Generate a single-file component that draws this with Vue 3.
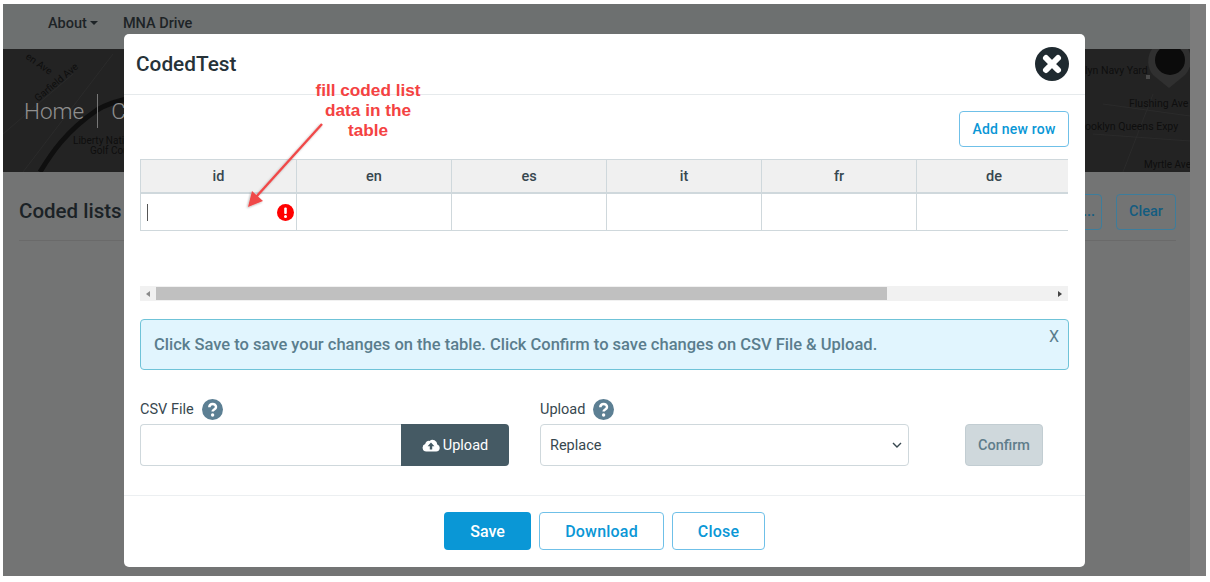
<script setup>
const columns = ['id', 'en', 'es', 'it', 'fr', 'de']
const mapLabels = [
  { x: 22, y: 54, t: 'en Ave', r: 35, s: 10 },
  { x: 35, y: 98, t: 'Garfield Ave', r: -40, s: 10 },
  { x: 70, y: 140, t: 'Liberty National', r: 0, s: 10 },
  { x: 87, y: 150, t: 'Golf Course', r: 0, s: 10 },
  { x: 1082, y: 70, t: 'lyn Navy Yard', r: 0, s: 10.5 },
  { x: 1126, y: 103, t: 'Flushing Ave', r: 0, s: 10.5 },
  { x: 1082, y: 126, t: 'ooklyn Queens Expy', r: 0, s: 10.5 },
  { x: 1141, y: 164, t: 'Myrtle Ave', r: 0, s: 10 }
]
</script>

<template>
  <div class="screen">
    <div class="page">
      <div class="main">
        <nav class="nav">
          <span class="nav-item">About<i class="caret"></i></span>
          <span class="nav-item">MNA Drive</span>
        </nav>
        <header class="hero">
          <svg class="map" width="1187" height="123" viewBox="0 45 1187 123">
            <path d="M37 168 C48 150 62 128 94 106 C104 100 112 98 124 95" fill="none" stroke="#0f0f0f" stroke-width="5" />
            <path d="M0 130 L70 70 M20 168 L110 50 M1100 100 L1187 112 M1090 130 L1187 137 M1120 168 L1150 90" fill="none" stroke="#2b2b2b" stroke-width="1" />
            <path d="M1149 45 h36 a22 22 0 0 1 -3 26 L1166 84 L1150 71 a22 22 0 0 1 -1 -26 z" fill="#303030" />
            <circle cx="1167" cy="56" r="15" fill="#0b0b0b" />
            <rect x="1143" y="71" width="4" height="4" fill="#4a4a4a" />
            <text
              v-for="l in mapLabels"
              :key="l.t"
              :x="l.x"
              :y="l.y"
              :font-size="l.s"
              :transform="`rotate(${l.r} ${l.x} ${l.y})`"
              class="map-label"
            >{{ l.t }}</text>
          </svg>
          <div class="crumbs"><span>Home</span><i></i><span>Coded lists</span></div>
        </header>
        <section class="section">
          <h2>Coded lists</h2>
          <div class="section-actions">
            <button class="ghost dots">...</button>
            <button class="ghost">Clear</button>
          </div>
        </section>
      </div>
      <div class="page-scroll"></div>

      <div class="modal">
        <div class="modal-head">
          <h1>CodedTest</h1>
          <svg class="close-icon" width="34" height="34" viewBox="0 0 34 34">
            <circle cx="17" cy="17" r="17" fill="#1f2a30" />
            <path d="M11 11 L23 23 M23 11 L11 23" stroke="#fff" stroke-width="6" stroke-linecap="round" />
          </svg>
        </div>

        <div class="modal-body">
          <div class="toolbar"><button class="outline add">Add new row</button></div>
          <div class="table-wrap">
            <div class="grid head">
              <div v-for="c in columns" :key="c" class="cell">{{ c }}</div>
            </div>
            <div class="grid row">
              <div v-for="c in columns" :key="c" class="cell">
                <template v-if="c === 'id'">
                  <span class="cursor"></span>
                  <svg class="err" width="17" height="17" viewBox="0 0 17 17">
                    <circle cx="8.5" cy="8.5" r="8.5" fill="#f00" />
                    <rect x="7.2" y="3.4" width="2.6" height="6.6" rx="1" fill="#fff" />
                    <circle cx="8.5" cy="12.4" r="1.5" fill="#fff" />
                  </svg>
                </template>
              </div>
            </div>
          </div>

          <div class="scrollbar">
            <span class="arrow left"></span>
            <span class="thumb"></span>
            <span class="arrow right"></span>
          </div>

          <div class="alert">
            Click Save to save your changes on the table. Click Confirm to save changes on CSV File &amp; Upload.
            <span class="alert-x">X</span>
          </div>

          <div class="form">
            <div class="field csv">
              <label>CSV File
                <svg class="help" width="21" height="21" viewBox="0 0 21 21">
                  <circle cx="10.5" cy="10.5" r="10.5" fill="#5c7f93" />
                  <path d="M7.3 8.2 C7.4 3.9 14 3.9 14 8 C14 10.6 10.6 10.4 10.6 12.6" fill="none" stroke="#fff" stroke-width="2.5" />
                  <circle cx="10.6" cy="16" r="1.7" fill="#fff" />
                </svg>
              </label>
              <div class="file">
                <div class="file-input"></div>
                <div class="file-btn">
                  <svg width="18" height="14" viewBox="0 0 18 14">
                    <path d="M4.3 13.5 A3.8 3.8 0 0 1 3.2 6.1 A3.6 3.6 0 0 1 7.6 2.9 A4.8 4.8 0 0 1 15.3 6.5 A3.6 3.6 0 0 1 14.2 13.5 Z" fill="#fff" />
                    <path d="M9 4.6 L12.4 8.2 H10.2 V11.6 H7.8 V8.2 H5.6 Z" fill="#455a64" />
                  </svg>
                  Upload
                </div>
              </div>
            </div>
            <div class="field upload">
              <label>Upload
                <svg class="help" width="21" height="21" viewBox="0 0 21 21">
                  <circle cx="10.5" cy="10.5" r="10.5" fill="#5c7f93" />
                  <path d="M7.3 8.2 C7.4 3.9 14 3.9 14 8 C14 10.6 10.6 10.4 10.6 12.6" fill="none" stroke="#fff" stroke-width="2.5" />
                  <circle cx="10.6" cy="16" r="1.7" fill="#fff" />
                </svg>
              </label>
              <div class="select">
                Replace
                <svg width="10" height="6" viewBox="0 0 10 6">
                  <path d="M1 1 L5 5 L9 1" fill="none" stroke="#37474f" stroke-width="1.4" />
                </svg>
              </div>
            </div>
            <button class="confirm">Confirm</button>
          </div>
        </div>

        <div class="modal-foot">
          <button class="primary">Save</button>
          <button class="outline download">Download</button>
          <button class="outline close">Close</button>
        </div>

        <div class="note">fill coded list<br />data in the<br />table</div>
        <svg class="note-arrow" width="90" height="100" viewBox="0 0 90 100">
          <defs>
            <filter id="sh" x="-20%" y="-20%" width="140%" height="140%">
              <feDropShadow dx="-1" dy="1" stdDeviation="1" flood-color="#000" flood-opacity=".3" />
            </filter>
          </defs>
          <g filter="url(#sh)">
            <path d="M80 6 L14 79" stroke="#f04a4a" stroke-width="2.4" />
            <path d="M6 89 L10 73 L21 83 Z" fill="#f04a4a" />
          </g>
        </svg>
      </div>
    </div>
  </div>
</template>

<style>
html, body { margin: 0; background: #fff; }
</style>

<style scoped>
.screen {
  width: 1210px;
  height: 582px;
  padding: 4px 4px 6px 3px;
  box-sizing: border-box;
  overflow: hidden;
  font-family: Roboto, "Liberation Sans", sans-serif;
  background: #fff;
}
.page {
  position: relative;
  display: flex;
  height: 572px;
  background: #737474;
}
.main { width: 1187px; display: flex; flex-direction: column; }
.page-scroll { width: 16px; background: #7c7c7c; }
.nav {
  height: 45px;
  background: #6d7070;
  display: flex;
  align-items: center;
  padding: 0 0 6px 45px;
  box-sizing: border-box;
  gap: 25px;
  color: #1d2326;
  font-size: 14.5px;
  font-weight: 500;
}
.caret {
  display: inline-block;
  margin-left: 3px;
  vertical-align: 3px;
  border-top: 4px solid #1d2326;
  border-left: 4px solid transparent;
  border-right: 4px solid transparent;
}
.hero {
  position: relative;
  height: 123px;
  background: #232323;
  overflow: hidden;
}
.map { position: absolute; inset: 0; }
.map-label { fill: #0e0e0e; font-family: Roboto, sans-serif; }
.crumbs {
  position: relative;
  display: flex;
  align-items: center;
  gap: 13px;
  height: 123px;
  padding: 0 0 0 21px;
  box-sizing: border-box;
  color: #8f8f8f;
  font-size: 22.5px;
  font-weight: 300;
}
.crumbs i { width: 1px; height: 34px; background: #777; }
.section {
  margin: 0 14px 0 16px;
  height: 69px;
  display: flex;
  align-items: center;
  justify-content: space-between;
  border-bottom: 1px solid #6a6a6a;
  padding-top: 9px;
  box-sizing: border-box;
}
.section h2 {
  margin: 0;
  font-size: 20.5px;
  font-weight: 500;
  color: #1b2226;
}
.section-actions { display: flex; gap: 14px; margin-top: 2px; }
.ghost {
  height: 36px;
  width: 60px;
  border: 1px solid #3d7d9c;
  border-radius: 4px;
  background: transparent;
  color: #135c80;
  font: 500 14.5px Roboto, sans-serif;
}
.ghost.dots { width: 40px; text-align: right; }

.modal {
  position: absolute;
  left: 121px;
  top: 30px;
  width: 961px;
  height: 533px;
  background: #fff;
  border-radius: 5px;
  display: flex;
  flex-direction: column;
}
.modal-head {
  height: 61px;
  flex: none;
  display: flex;
  align-items: center;
  justify-content: space-between;
  padding: 0 16px 0 12px;
  border-bottom: 1px solid #e6eaec;
  box-sizing: border-box;
}
.modal-head h1 {
  margin: 0 0 1px;
  font-size: 20.8px;
  font-weight: 500;
  color: #263238;
}
.close-icon { display: block; }
.modal-body { flex: 1; padding: 16px 16px 0; display: flex; flex-direction: column; }
.toolbar { display: flex; justify-content: flex-end; height: 48px; }
button { box-sizing: border-box; cursor: pointer; }
.outline {
  background: #fff;
  border: 1px solid #6fc0e8;
  border-radius: 4px;
  color: #0a97d6;
  font: 500 14px Roboto, sans-serif;
  letter-spacing: .2px;
}
.add { width: 110px; height: 36px; }
.table-wrap { width: 928px; overflow: hidden; }
.grid { display: grid; grid-template-columns: 156px repeat(5, 155px); width: 936px; }
.head {
  height: 35px;
  background: #f0f0f0;
  border: 1px solid #cfd8dc;
  border-width: 1px 0 2px 1px;
  box-sizing: border-box;
}
.head .cell {
  display: flex;
  align-items: center;
  justify-content: center;
  border-right: 1px solid #cfd8dc;
  color: #37474f;
  font-size: 14.5px;
  font-weight: 500;
}
.row {
  height: 37px;
  border: 1px solid #cfd8dc;
  border-width: 0 0 1px 1px;
  box-sizing: border-box;
}
.row .cell {
  position: relative;
  border-right: 1px solid #cfd8dc;
}
.cursor {
  position: absolute;
  left: 6px;
  top: 10px;
  width: 1px;
  height: 17px;
  background: #555;
}
.err { position: absolute; right: 2px; top: 10px; }
.scrollbar {
  margin-top: 55px;
  width: 928px;
  height: 15px;
  background: #f1f1f1;
  display: flex;
  align-items: center;
  position: relative;
}
.thumb { position: absolute; left: 16px; top: 1px; width: 731px; height: 13px; background: #c0c0c0; }
.arrow { position: absolute; width: 0; height: 0; border-top: 3.5px solid transparent; border-bottom: 3.5px solid transparent; }
.arrow.left { left: 6px; border-right: 4px solid #8a8a8a; }
.arrow.right { right: 6px; border-left: 4px solid #444; }
.alert {
  position: relative;
  margin-top: 18px;
  width: 929px;
  height: 51px;
  box-sizing: border-box;
  background: #e1f5fe;
  border: 1px solid #6fc3d8;
  border-radius: 4px;
  padding: 0 13px;
  display: flex;
  align-items: center;
  color: #5a7d8d;
  font-size: 16.5px;
  font-weight: 500;
}
.alert-x {
  position: absolute;
  right: 9px;
  top: 7px;
  font-size: 16px;
  font-weight: 400;
}
.form { display: flex; align-items: flex-end; margin-top: 29px; }
.field label {
  display: flex;
  align-items: center;
  gap: 8px;
  height: 21px;
  margin-bottom: 4px;
  color: #37474f;
  font-size: 14.5px;
}
.help { display: block; }
.csv { width: 369px; }
.upload { width: 369px; margin-left: 31px; }
.file { display: flex; height: 42px; }
.file-input {
  flex: 1;
  border: 1px solid #cfd8dc;
  border-right: 0;
  border-radius: 4px 0 0 4px;
}
.file-btn {
  width: 108px;
  background: #455a64;
  border-radius: 0 4px 4px 0;
  color: #fff;
  font-size: 14.5px;
  display: flex;
  align-items: center;
  justify-content: center;
  gap: 3px;
}
.select {
  height: 42px;
  box-sizing: border-box;
  border: 1px solid #cfd8dc;
  border-radius: 4px;
  padding: 0 6px 0 9px;
  display: flex;
  align-items: center;
  justify-content: space-between;
  color: #37474f;
  font-size: 14.5px;
}
.confirm {
  margin-left: 56px;
  width: 78px;
  height: 42px;
  background: #cfd8dc;
  border: 1px solid #c2cdd2;
  border-radius: 4px;
  color: #607d8b;
  font: 500 14.5px Roboto, sans-serif;
}
.modal-foot {
  height: 72px;
  flex: none;
  border-top: 1px solid #eceff1;
  box-sizing: border-box;
  display: flex;
  justify-content: center;
  align-items: flex-start;
  gap: 8px;
  padding-top: 16px;
}
.modal-foot button { height: 38px; font-size: 16px; }
.primary {
  width: 87px;
  background: #0a97d6;
  border: 0;
  border-radius: 4px;
  color: #fff;
  font: 500 16px Roboto, sans-serif;
}
.download { width: 125px; }
.close { width: 93px; }
.note {
  position: absolute;
  left: 164px;
  top: 46px;
  width: 160px;
  text-align: center;
  color: #f44242;
  font: 700 17.2px/20px "Liberation Sans", Arial, sans-serif;
}
.note-arrow { position: absolute; left: 118px; top: 84px; }
</style>
